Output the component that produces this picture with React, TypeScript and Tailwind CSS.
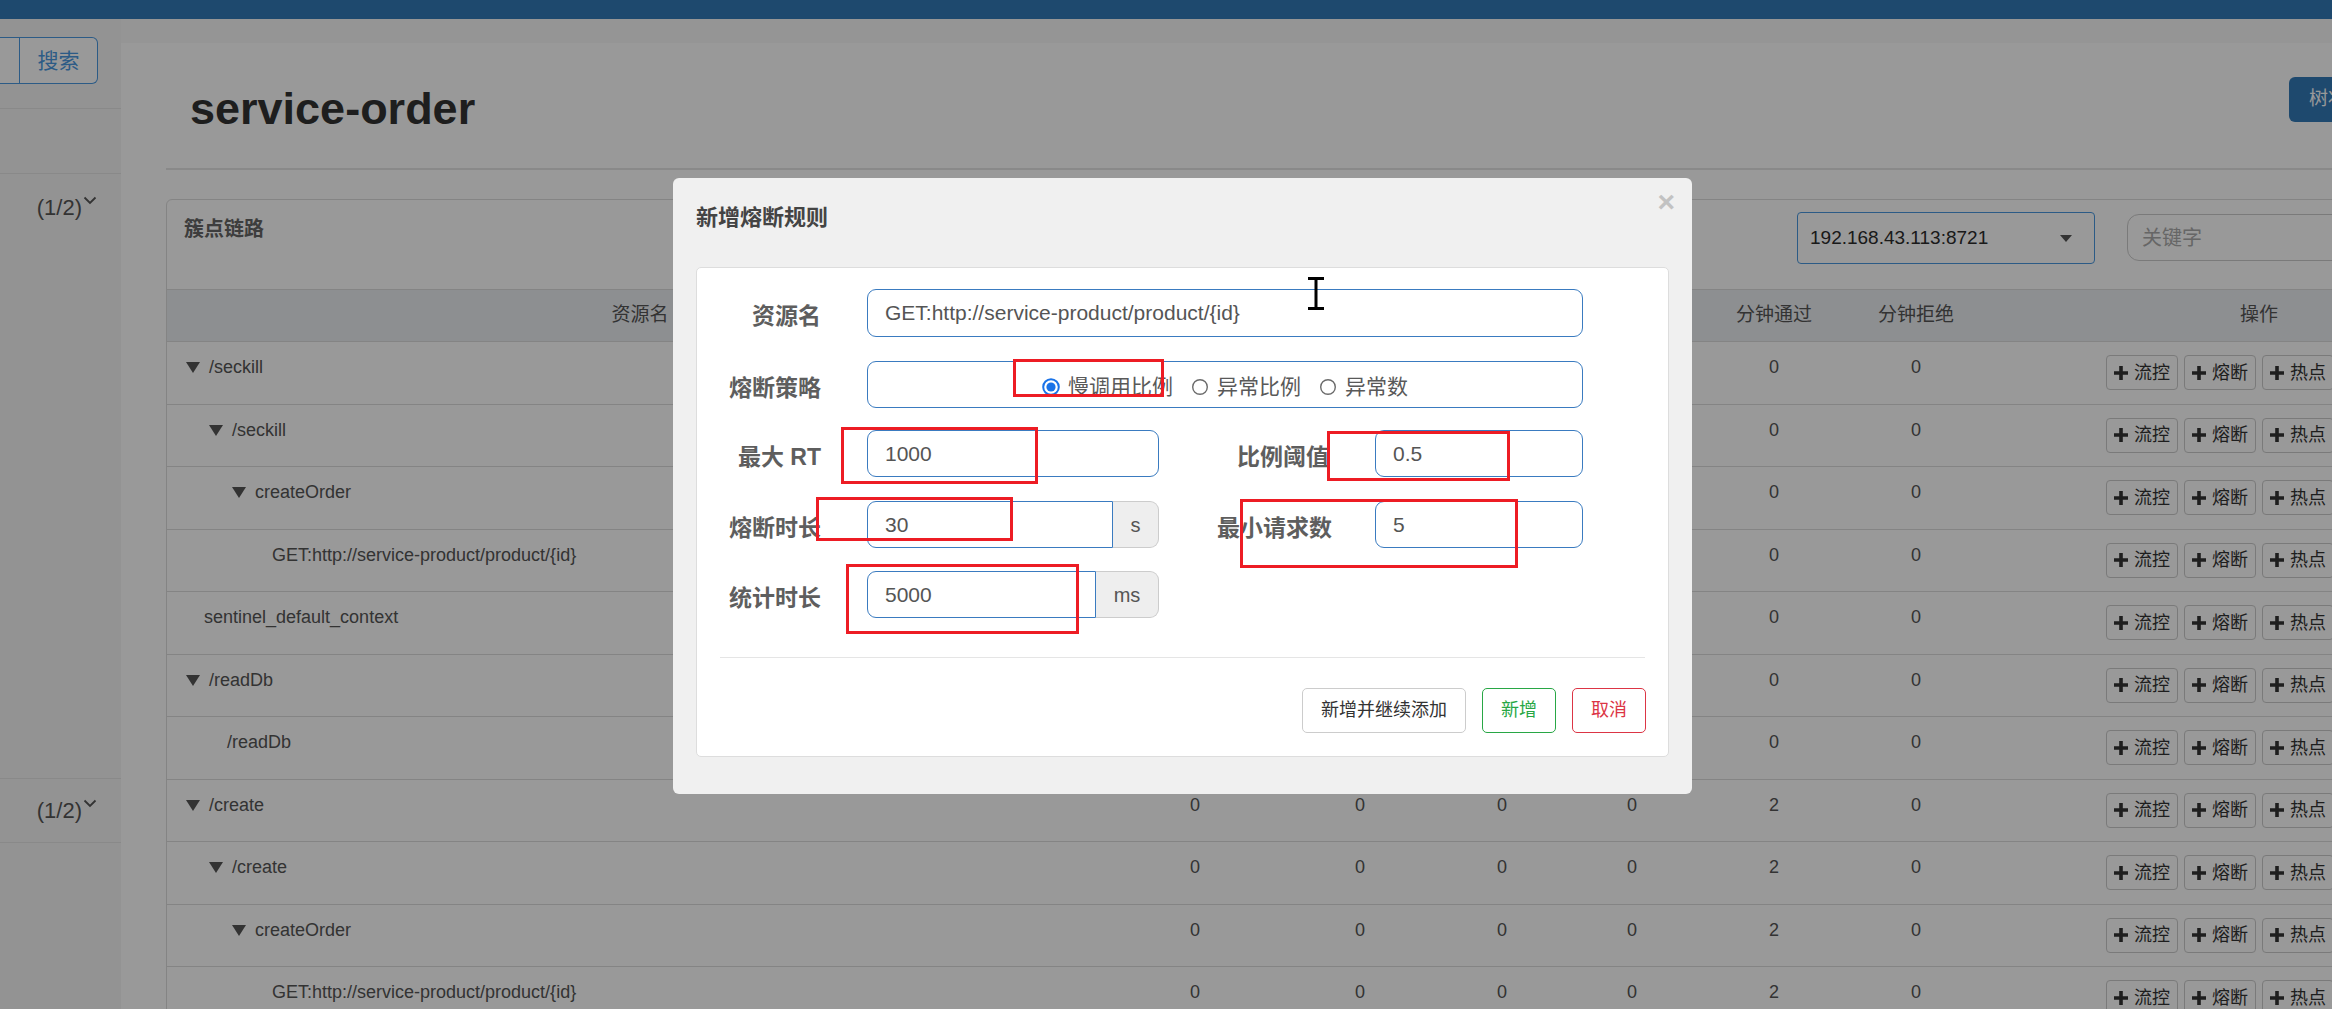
import React from 'react';

type Row = { name: string; level: number; arrow: boolean; stats: number[] };

const rows: Row[] = [
  { name: '/seckill', level: 0, arrow: true, stats: [0, 0, 0, 0, 0, 0] },
  { name: '/seckill', level: 1, arrow: true, stats: [0, 0, 0, 0, 0, 0] },
  { name: 'createOrder', level: 2, arrow: true, stats: [0, 0, 0, 0, 0, 0] },
  { name: 'GET:http://service-product/product/{id}', level: 3, arrow: false, stats: [0, 0, 0, 0, 0, 0] },
  { name: 'sentinel_default_context', level: 0, arrow: false, stats: [0, 0, 0, 0, 0, 0] },
  { name: '/readDb', level: 0, arrow: true, stats: [0, 0, 0, 0, 0, 0] },
  { name: '/readDb', level: 1, arrow: false, stats: [0, 0, 0, 0, 0, 0] },
  { name: '/create', level: 0, arrow: true, stats: [0, 0, 0, 0, 2, 0] },
  { name: '/create', level: 1, arrow: true, stats: [0, 0, 0, 0, 2, 0] },
  { name: 'createOrder', level: 2, arrow: true, stats: [0, 0, 0, 0, 2, 0] },
  { name: 'GET:http://service-product/product/{id}', level: 3, arrow: false, stats: [0, 0, 0, 0, 2, 0] },
];

const indent = ['pl-[14px]', 'pl-[37px]', 'pl-[60px]', 'pl-[82px]'];

const columns = ['资源名', '通过QPS', '拒绝QPS', '并发数', '平均RT', '分钟通过', '分钟拒绝', '操作'];

const Plus = () => (
  <svg width="14" height="14" viewBox="0 0 14 14" className="shrink-0">
    <path d="M5.2 0h3.6v5.2H14v3.6H8.8V14H5.2V8.8H0V5.2h5.2z" fill="#333" />
  </svg>
);

const Caret = () => (
  <svg width="14" height="11" viewBox="0 0 14 11" className="ml-[5px] mt-[1px]">
    <path d="M0 0h14L7 11z" fill="#555" />
  </svg>
);

const ActionButton = ({ label }: { label: string }) => (
  <span className="flex h-[35px] w-[72px] shrink-0 items-center gap-[6px] rounded-[4px] border border-[#ccc] bg-white pl-[7px] text-[18px] text-[#333]">
    <Plus />
    {label}
  </span>
);

const Radio = ({ checked, label }: { checked?: boolean; label: string }) => (
  <span className="flex items-center gap-[8px]">
    <svg width="18" height="18" viewBox="0 0 18 18">
      {checked ? (
        <>
          <circle cx="9" cy="9" r="7.8" fill="white" stroke="#1a73e8" strokeWidth="2" />
          <circle cx="9" cy="9" r="4.6" fill="#1a73e8" />
        </>
      ) : (
        <circle cx="9" cy="9" r="7.3" fill="white" stroke="#6b6b6b" strokeWidth="1.4" />
      )}
    </svg>
    {label}
  </span>
);

const Chevron = () => (
  <svg width="14" height="9" viewBox="0 0 14 9" className="mb-[14px] ml-[1px]">
    <polyline points="1.5,1.5 7,7 12.5,1.5" fill="none" stroke="#555" strokeWidth="1.8" />
  </svg>
);

const Sidebar = () => (
  <aside className="flex w-[121px] shrink-0 flex-col bg-[#f5f5f5]">
    <div className="mt-[18px] flex h-[47px]">
      <div className="w-[20px] border-y border-r border-[#4a98e0] bg-white" />
      <div className="flex w-[78px] items-center justify-center rounded-r-[6px] border-y border-r border-[#4a98e0] bg-white text-[21px] text-[#4a98e0]">
        搜索
      </div>
    </div>
    <div className="mt-[24px] h-[65px] border-t border-[#e5e5e5]" />
    <div className="flex h-[68px] items-center justify-end border-t border-[#e5e5e5] pr-[24px] text-[22px] text-[#555]">
      (1/2)
      <Chevron />
    </div>
    <div className="h-[537px]" />
    <div className="flex h-[65px] items-center justify-end border-y border-[#e5e5e5] pr-[24px] text-[22px] text-[#555]">
      (1/2)
      <Chevron />
    </div>
  </aside>
);

const ResourceTable = () => (
  <div className="mt-[29px] rounded-t-[6px] border border-[#ddd] bg-white">
    <div className="flex h-[90px] items-start border-b border-[#ddd] pl-[17px]">
      <div className="mt-[15px] w-[1613px] shrink-0 text-[20px] font-bold leading-[28px] text-[#666]">
        <span>簇点链路</span>
      </div>
      <div className="mt-[12px] flex h-[52px] w-[298px] shrink-0 items-center justify-between rounded-[4px] border border-[#4a98e0] bg-white pl-[12px] pr-[22px] text-[19px] text-[#2c2c2c]">
        192.168.43.113:8721
        <svg width="12" height="7" viewBox="0 0 12 7">
          <path d="M0 0h12L6 7z" fill="#555" />
        </svg>
      </div>
      <div className="ml-[32px] mt-[14px] flex h-[47px] w-[320px] shrink-0 items-center rounded-[12px] border border-[#ccc] bg-white pl-[14px] text-[20px] text-[#aaa]">
        关键字
      </div>
    </div>
    <div className="grid h-[52px] grid-cols-[946px_164px_166px_118px_142px_142px_142px_544px] items-center border-b border-[#ddd] bg-[#ebeef2] text-[19px] text-[#555]">
      {columns.map((c) => (
        <div key={c} className="text-center">
          {c}
        </div>
      ))}
    </div>
    {rows.map((r, i) => (
      <div
        key={i}
        className="grid h-[62.5px] grid-cols-[946px_164px_166px_118px_142px_142px_142px_544px] items-start border-b border-[#ddd] text-[18px] leading-[24px] text-[#555]"
      >
        <div className={`flex items-center pt-[13px] ${indent[r.level]}`}>
          {r.arrow ? (
            <span className="flex w-[28px] shrink-0">
              <Caret />
            </span>
          ) : (
            <span className="w-[23px] shrink-0" />
          )}
          {r.name}
        </div>
        {r.stats.map((s, j) => (
          <div key={j} className="pt-[13px] text-center">
            {s}
          </div>
        ))}
        <div className="flex justify-center gap-[6px] pt-[13px]">
          <ActionButton label="流控" />
          <ActionButton label="熔断" />
          <ActionButton label="热点" />
          <ActionButton label="授权" />
        </div>
      </div>
    ))}
  </div>
);

const Main = () => (
  <main className="flex w-[2454px] shrink-0 flex-col">
    <div className="h-[24px] bg-[#f8f8f8]" />
    <div className="px-[45px]">
      <div className="flex h-[127px] items-start justify-between border-b-2 border-[#e5e5e5]">
        <h1 className="pl-[24px] pt-[41px] text-[45px] font-bold leading-[49px] text-[#333]">service-order</h1>
        <div className="mt-[34px] flex h-[45px]">
          <div className="flex w-[121px] items-center rounded-l-[6px] bg-[#337ab7] pl-[20px] text-[19px] text-white">树状视图</div>
          <div className="flex w-[120px] items-center justify-center rounded-r-[6px] border border-[#337ab7] bg-white text-[19px] text-[#337ab7]">
            列表视图
          </div>
        </div>
      </div>
      <ResourceTable />
    </div>
  </main>
);

const Field = ({ value, className }: { value: string; className: string }) => (
  <div className={`flex items-center rounded-[9px] border border-[#3a7bc0] bg-white px-[17px] text-[21px] text-[#555] ${className}`}>
    {value}
  </div>
);

const AddonField = ({ value, unit, unitWidth }: { value: string; unit: string; unitWidth: string }) => (
  <div className="ml-[46px] flex h-[47px] w-[292px]">
    <div className="flex flex-1 items-center rounded-l-[9px] border border-[#3a7bc0] bg-white px-[17px] text-[21px] text-[#555]">{value}</div>
    <div className={`flex items-center justify-center rounded-r-[9px] border-y border-r border-[#ccc] bg-[#eee] text-[20px] text-[#555] ${unitWidth}`}>
      {unit}
    </div>
  </div>
);

const Label = ({ text, className }: { text: string; className: string }) => (
  <div className={`shrink-0 pt-[7px] text-right text-[23px] font-bold text-[#5e5e5e] ${className}`}>{text}</div>
);

const Modal = () => (
  <div className="absolute left-[673px] top-[178px] h-[616px] w-[1019px] rounded-[6px] bg-[#f0f0f0] px-[23px]">
    <div className="flex h-[89px] items-start justify-between">
      <div className="pt-[25px] text-[22px] font-bold leading-[30px] text-[#444]">新增熔断规则</div>
      <div className="-mr-[6px] mt-[9px] text-[30px] font-bold leading-[30px] text-[#c2c2c2]">×</div>
    </div>
    <div className="flex h-[490px] flex-col rounded-[5px] border border-[#ddd] bg-white pt-[21px]">
      <div className="flex h-[48px] items-center">
        <Label text="资源名" className="w-[124px]" />
        <Field value="GET:http://service-product/product/{id}" className="ml-[46px] h-[48px] w-[716px]" />
      </div>
      <div className="mt-[24px] flex h-[47px] items-center">
        <Label text="熔断策略" className="w-[124px]" />
        <div className="ml-[46px] flex h-[47px] w-[716px] items-center justify-center gap-[18px] rounded-[9px] border border-[#3a7bc0] pt-[4px] text-[21px] text-[#595959]">
          <Radio checked label="慢调用比例" />
          <Radio label="异常比例" />
          <Radio label="异常数" />
        </div>
      </div>
      <div className="mt-[22px] flex h-[47px] items-center">
        <Label text="最大 RT" className="w-[124px]" />
        <Field value="1000" className="ml-[46px] h-[47px] w-[292px]" />
        <Label text="比例阈值" className="w-[170px]" />
        <Field value="0.5" className="ml-[46px] h-[47px] w-[208px]" />
      </div>
      <div className="mt-[24px] flex h-[47px] items-center">
        <Label text="熔断时长" className="w-[124px]" />
        <AddonField value="30" unit="s" unitWidth="w-[46px]" />
        <Label text="最小请求数" className="w-[173px]" />
        <Field value="5" className="ml-[43px] h-[47px] w-[208px]" />
      </div>
      <div className="mt-[23px] flex h-[47px] items-center">
        <Label text="统计时长" className="w-[124px]" />
        <AddonField value="5000" unit="ms" unitWidth="w-[63px]" />
      </div>
      <div className="mx-[23px] mt-[39px] h-px bg-[#e5e5e5]" />
      <div className="mr-[22px] mt-[30px] flex h-[45px] justify-end gap-[16px] text-[18px]">
        <div className="flex items-center rounded-[5px] border border-[#ccc] px-[18px] text-[#333]">新增并继续添加</div>
        <div className="flex items-center rounded-[5px] border border-[#28a745] px-[18px] text-[#28a745]">新增</div>
        <div className="flex items-center rounded-[5px] border border-[#dc3545] px-[18px] text-[#dc3545]">取消</div>
      </div>
    </div>

    {/* red annotation boxes drawn over the form */}
    <div className="absolute left-[340px] top-[181px] h-[38px] w-[151px] border-[3px] border-[#ed1c24]" />
    <div className="absolute left-[168px] top-[249px] h-[57px] w-[197px] border-[3px] border-[#ed1c24]" />
    <div className="absolute left-[654px] top-[253px] h-[50px] w-[183px] border-[3px] border-[#ed1c24]" />
    <div className="absolute left-[143px] top-[319px] h-[44px] w-[197px] border-[3px] border-[#ed1c24]" />
    <div className="absolute left-[567px] top-[321px] h-[69px] w-[278px] border-[3px] border-[#ed1c24]" />
    <div className="absolute left-[173px] top-[386px] h-[70px] w-[233px] border-[3px] border-[#ed1c24]" />
  </div>
);

export default function App() {
  return (
    <div className="relative h-[1009px] w-[2332px] overflow-hidden bg-white font-['Liberation_Sans','Noto_Sans_CJK_SC',sans-serif]">
      <div className="flex w-[2575px] flex-col">
        <div className="h-[19px] bg-[#337ab7]" />
        <div className="flex">
          <Sidebar />
          <Main />
        </div>
      </div>
      <div className="absolute inset-0 bg-black/40" />
      <Modal />
      <svg width="16" height="33" viewBox="0 0 16 33" className="absolute left-[1308px] top-[277px]">
        <path d="M0 1.5h16M0 31.5h16M8 1.5v30" stroke="#000" strokeWidth="3" fill="none" />
      </svg>
    </div>
  );
}
